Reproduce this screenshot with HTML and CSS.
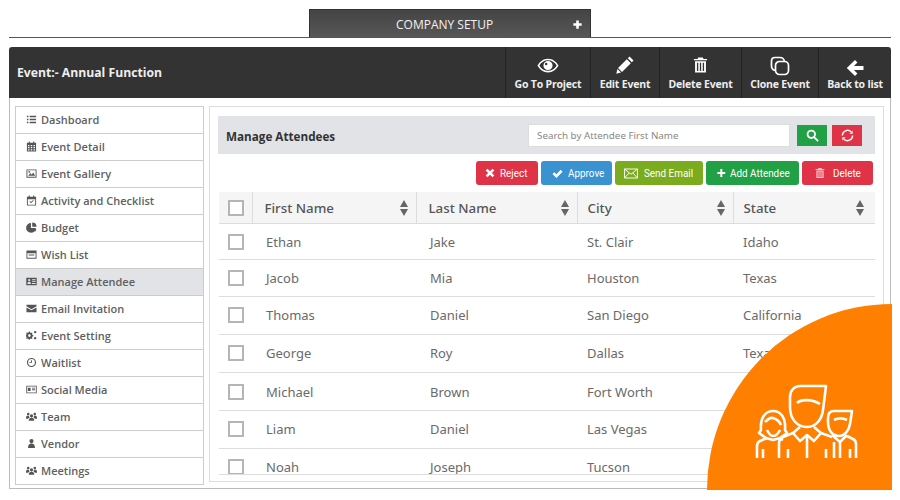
FILE: index.html
```html
<!DOCTYPE html>
<html lang="en">
<head>
    <meta charset="UTF-8">
    <title>Manage Attendees</title>
    <link rel="stylesheet" href="styles.css">
</head>

<body>
    <svg class="defs" width="0" height="0">
        <symbol id="i-list" viewBox="0 0 12 12"><path d="M1 2h1.600v1.600H1zM4 2h7v1.600H4zM1 5.200h1.600v1.600H1zM4 5.200h7v1.600H4zM1 8.400h1.600V10H1zM4 8.400h7V10H4z"/></symbol>
        <symbol id="i-cal" viewBox="0 0 12 12"><path d="M3 .5h1.200V2h3.600V.5H9V2h2v9.500H1V2h2zM2.200 4.300v1.400h1.600V4.300zm3 0v1.400h1.600V4.300zm3 0v1.400h1.600V4.300zm-6 2.300V8h1.600V6.600zm3 0V8h1.600V6.600zm3 0V8h1.600V6.600zm-6 2.300v1.400h1.600V8.900zm3 0v1.400h1.600V8.900zm3 0v1.400h1.600V8.900z"/></symbol>
        <symbol id="i-pic" viewBox="0 0 12 12"><path fill-rule="evenodd" d="M.5 1.500h11v9H.5zm1 1v7h9v-7zM2.500 8.500l2.200-3 1.600 1.800 1.500-2.300 2.200 3.500zM3.500 3.200a1 1 0 1 1 0 2 1 1 0 0 1 0-2z"/></symbol>
        <symbol id="i-check" viewBox="0 0 12 12"><path fill-rule="evenodd" d="M3 .5h1.200V2h3.600V.5H9V2h2v9.500H1V2h2zM2 4.500v6h8v-6zM3.700 7.200l.7-.7 1.100 1.100 2.200-2.200.7.7-2.900 2.900z"/></symbol>
        <symbol id="i-pie" viewBox="0 0 12 12"><path d="M5.400 1.200v5.400h5.300A5.300 5.300 0 1 1 5.400 1.200zM6.800.5a4.800 4.800 0 0 1 4.700 4.700H6.800zM7.200 7.700h4a4.800 4.800 0 0 1-1.300 2.800z"/></symbol>
        <symbol id="i-wish" viewBox="0 0 12 12"><path fill-rule="evenodd" d="M.5 1.500h11v9H.5zm1 3v5h9v-5zM3 6h6v1.200H3z"/></symbol>
        <symbol id="i-card" viewBox="0 0 12 12"><path fill-rule="evenodd" d="M.3 1.800h11.400v8.400H.3zM3.500 3.300a1.200 1.200 0 1 0 0 2.400 1.200 1.200 0 0 0 0-2.400zM1.600 8.600h3.800c0-1.500-.7-2.300-1.900-2.300S1.600 7.100 1.600 8.600zM6.500 3.600v1h4v-1zm0 2v1h4v-1zm0 2v1h4v-1z"/></symbol>
        <symbol id="i-mail" viewBox="0 0 12 12"><path d="M.5 2h11v1.600L6 6.700.5 3.600zM.5 5l5.500 3 5.500-3v5H.5z"/></symbol>
        <symbol id="i-gears" viewBox="0 0 12 12"><path fill-rule="evenodd" d="M4.400 2.800l1 .4.900-.5.800.8-.5.900.4 1 1 .3v1.100l-1 .3-.4 1 .5.900-.8.800-.9-.5-1 .4-.3 1H3.200l-.3-1-1-.4-.9.500-.8-.8.500-.9-.4-1-1-.3V5.600l1-.3.4-1L.2 3.400 1 2.600l.9.500 1-.4.300-1h1.100zM3.700 4.700a1.400 1.400 0 1 0 0 2.800 1.400 1.400 0 0 0 0-2.800zM10 1a1.300 1.300 0 1 1 0 2.600A1.300 1.300 0 0 1 10 1zM10 7.600a1.300 1.300 0 1 1 0 2.600 1.300 1.300 0 0 1 0-2.600z"/></symbol>
        <symbol id="i-clock" viewBox="0 0 12 12"><path fill-rule="evenodd" d="M6 1a5 5 0 1 1 0 10A5 5 0 0 1 6 1zm0 1.300a3.700 3.700 0 1 0 0 7.400 3.700 3.700 0 0 0 0-7.400zM5.500 3.500h1v2.900H3.700v-1h1.800z"/></symbol>
        <symbol id="i-social" viewBox="0 0 12 12"><path fill-rule="evenodd" d="M.3 1.800h11.400v8.400H.3zm.9.900v6.600h9.600V2.700zM2 4h3v3.600H2zM6.500 4h3.500v1H6.500zm0 1.800h3.500v1H6.500z"/></symbol>
        <symbol id="i-team" viewBox="0 0 12 12"><path d="M6 3.500a1.800 1.800 0 1 1 0 3.600 1.800 1.800 0 0 1 0-3.600zM2.400 2a1.400 1.400 0 1 1 0 2.800 1.400 1.400 0 0 1 0-2.800zM9.600 2a1.400 1.400 0 1 1 0 2.800 1.400 1.400 0 0 1 0-2.800zM3 10.500c0-2.400 1-3.200 3-3.200s3 .8 3 3.200zM0 7.500c0-1.500.7-2.200 2.400-2.200l1 .4a2.600 2.600 0 0 0 .5 1.300C3 7.400 2.400 8 2.200 8.500H0zM12 7.500c0-1.500-.7-2.200-2.400-2.200l-1 .4a2.600 2.600 0 0 1-.5 1.300c.9.400 1.500 1 1.700 1.500H12z"/></symbol>
        <symbol id="i-user" viewBox="0 0 12 12"><path d="M6 1a2.300 2.300 0 1 1 0 4.600A2.300 2.300 0 0 1 6 1zM2.200 11c0-3.300 1.200-5 3.800-5s3.800 1.700 3.800 5z"/></symbol>
        <symbol id="i-trash" viewBox="0 0 16 18"><path fill-rule="evenodd" d="M5.500 1h5l.7 1.600H15v1.400H1V2.600h3.800zM2.200 5h11.600v12H2.200zm2 1.500v9h1.400v-9zm3.100 0v9h1.400v-9zm3.100 0v9h1.400v-9z"/></symbol>
    </svg>

    <div class="page">
        <div class="tab-bar">
            <div class="tab">
                <span class="tab-label">COMPANY SETUP</span>
                <svg viewBox="0 0 12 12" width="9" height="9"><path fill="#fff" d="M4.300 .5h3.400v3.800h3.800v3.400H7.700v3.800H4.300V7.700H.5V4.300h3.800z"/></svg>
            </div>
        </div>

        <header class="event-bar">
            <h1 class="event-title">Event:- Annual Function</h1>
            <nav class="tools">
                <a class="tool tool-project">
                    <svg class="tool-icon" viewBox="0 0 24 18" width="22" height="17"><path fill="#fff" fill-rule="evenodd" d="M12 1.500c5 0 9 3 11.500 7.500C21 13.500 17 16.500 12 16.500S3 13.500.5 9C3 4.500 7 1.500 12 1.500zM12 3.200C8 3.200 4.600 5.400 2.500 9c2.100 3.600 5.500 5.800 9.500 5.800s7.400-2.200 9.500-5.800c-2.100-3.600-5.500-5.800-9.500-5.800zM12 4a5 5 0 1 1 0 10 5 5 0 0 1 0-10zm-2 2a1.300 1.300 0 1 0 0 2.600A1.300 1.300 0 0 0 10 6z"/></svg>
                    <span>Go To Project</span>
                </a>
                <a class="tool tool-edit">
                    <svg class="tool-icon" viewBox="0 0 18 18" width="18" height="18"><path fill="#fff" d="M13.500.5l4 4-1.700 1.700-4-4zM10.800 3.200l4 4L6 16l-4-4zM1.400 13l3.600 3.600-4.700 1.100z"/></svg>
                    <span>Edit Event</span>
                </a>
                <a class="tool tool-delete">
                    <svg class="tool-icon" viewBox="0 0 16 18" width="15" height="18"><use href="#i-trash" fill="#fff"/></svg>
                    <span>Delete Event</span>
                </a>
                <a class="tool tool-clone">
                    <svg class="tool-icon" viewBox="0 0 20 20" width="20" height="20" fill="none" stroke="#fff" stroke-width="1.700"><path d="M5.500 14.500C3 14 1.500 12.500 1.500 10V5c0-2.200 1.300-3.500 3.500-3.500h5c2.500 0 4 1.500 4.500 4"/><rect x="5.500" y="5.500" width="13" height="13" rx="4"/></svg>
                    <span>Clone Event</span>
                </a>
                <a class="tool tool-back">
                    <svg class="tool-icon" viewBox="0 0 18 18" width="18" height="18"><path fill="#fff" d="M9 1l2.400 2.400-3.400 3.700h9.500v3.800H8l3.400 3.700L9 17 .8 9z"/></svg>
                    <span>Back to list</span>
                </a>
            </nav>
        </header>

        <div class="frame">
            <ul class="side-menu">
                <li><svg class="side-icon"><use href="#i-list"/></svg>Dashboard</li>
                <li><svg class="side-icon"><use href="#i-cal"/></svg>Event Detail</li>
                <li><svg class="side-icon"><use href="#i-pic"/></svg>Event Gallery</li>
                <li><svg class="side-icon"><use href="#i-check"/></svg>Activity and Checklist</li>
                <li><svg class="side-icon"><use href="#i-pie"/></svg>Budget</li>
                <li><svg class="side-icon"><use href="#i-wish"/></svg>Wish List</li>
                <li class="active"><svg class="side-icon"><use href="#i-card"/></svg>Manage Attendee</li>
                <li><svg class="side-icon"><use href="#i-mail"/></svg>Email Invitation</li>
                <li><svg class="side-icon"><use href="#i-gears"/></svg>Event Setting</li>
                <li><svg class="side-icon"><use href="#i-clock"/></svg>Waitlist</li>
                <li><svg class="side-icon"><use href="#i-social"/></svg>Social Media</li>
                <li><svg class="side-icon"><use href="#i-team"/></svg>Team</li>
                <li><svg class="side-icon"><use href="#i-user"/></svg>Vendor</li>
                <li><svg class="side-icon"><use href="#i-team"/></svg>Meetings</li>
            </ul>

            <main class="panel">
                <div class="panel-head">
                    <h2 class="panel-title">Manage Attendees</h2>
                    <input class="search" type="text" placeholder="Search by Attendee First Name">
                    <button class="square green">
                        <svg viewBox="0 0 14 14" width="13" height="13" fill="none" stroke="#fff" stroke-width="2"><circle cx="5.700" cy="5.700" r="4"/><path d="M8.700 8.700l4.300 4.300"/></svg>
                    </button>
                    <button class="square red">
                        <svg viewBox="0 0 14 14" width="13" height="13" fill="none" stroke="#fff" stroke-width="1.500"><path d="M1.500 7a5.500 5.500 0 0 1 9.300-4M12.500 7a5.500 5.500 0 0 1-9.300 4"/><path fill="#fff" stroke="none" d="M12.500 1.500v3.500H9zM1.500 12.500V9H5z"/></svg>
                    </button>
                </div>

                <div class="actions">
                    <button class="act red btn-reject"><svg viewBox="0 0 12 12" width="10" height="10"><path fill="#fff" d="M3 .8L6 3.800 9 .8l2.200 2.200-3 3 3 3L9 11.200l-3-3-3 3L.8 9l3-3-3-3z"/></svg><span>Reject</span></button>
                    <button class="act blue btn-approve"><svg viewBox="0 0 12 12" width="11" height="11"><path fill="#fff" d="M.5 6.500l2-2 2.300 2.300L9.500 2l2 2-6.700 6.800z"/></svg><span>Approve</span></button>
                    <button class="act olive btn-mail"><svg viewBox="0 0 18 13" width="14" height="11" fill="none" stroke="#fff" stroke-width="1.200"><path d="M.7.700h16.600v11.600H.7zM.7.700L9 7.500 17.300.7M.7 12.300l6-6.600M17.300 12.300l-6-6.600"/></svg><span>Send Email</span></button>
                    <button class="act green btn-add"><svg viewBox="0 0 12 12" width="10" height="10"><path fill="#fff" d="M4.600 .5h2.800v4.100h4.100v2.800H7.400v4.100H4.600V7.400H.5V4.600h4.100z"/></svg><span>Add Attendee</span></button>
                    <button class="act red btn-delete"><svg viewBox="0 0 16 18" width="10" height="12"><use href="#i-trash" fill="#f7c6cb"/></svg><span>Delete</span></button>
                </div>

                <div class="table-wrap">
                    <table class="grid">
                        <colgroup>
                            <col class="col-check"><col class="col-first"><col class="col-last"><col class="col-city"><col class="col-state">
                        </colgroup>
                        <thead>
                            <tr>
                                <th><span class="box"></span></th>
                                <th><div class="th-in">First Name<span class="sort"></span></div></th>
                                <th><div class="th-in">Last Name<span class="sort"></span></div></th>
                                <th class="tight"><div class="th-in">City<span class="sort"></span></div></th>
                                <th class="tight"><div class="th-in th-end">State<span class="sort"></span></div></th>
                            </tr>
                        </thead>
                        <tbody>
                            <tr class="h36"><td><span class="box"></span></td><td>Ethan</td><td>Jake</td><td class="tight">St. Clair</td><td class="tight">Idaho</td></tr>
                            <tr class="h37"><td><span class="box"></span></td><td>Jacob</td><td>Mia</td><td class="tight">Houston</td><td class="tight">Texas</td></tr>
                            <tr class="up"><td><span class="box"></span></td><td>Thomas</td><td>Daniel</td><td class="tight">San Diego</td><td class="tight">California</td></tr>
                            <tr class="up"><td><span class="box"></span></td><td>George</td><td>Roy</td><td class="tight">Dallas</td><td class="tight">Texas</td></tr>
                            <tr><td><span class="box"></span></td><td>Michael</td><td>Brown</td><td class="tight">Fort Worth</td><td class="tight">Texas</td></tr>
                            <tr class="up"><td><span class="box"></span></td><td>Liam</td><td>Daniel</td><td class="tight">Las Vegas</td><td class="tight">Nevada</td></tr>
                            <tr class="up"><td><span class="box"></span></td><td>Noah</td><td>Joseph</td><td class="tight">Tucson</td><td class="tight">Arizona</td></tr>
                        </tbody>
                    </table>
                </div>
            </main>
        </div>
    </div>

    <div class="corner">
        <svg class="corner-icon" viewBox="0 0 115 85" width="115" height="85" fill="none" stroke="#fff" stroke-width="2.600" stroke-linejoin="round" stroke-linecap="butt">
            <path d="M76 6H50c-6 0-10 5-10 11v10c0 12 7 20 17 20s15-9 16-17z"/>
            <path d="M47 23c4-4 15-4 23 1"/>
            <path d="M50 47l-7 6 7 8 7-6 7 6 7-8-7-6"/>
            <path d="M57 55v23M43 53l-10 4c-3 1-4 4-4 7v14M71 53l11 4M38 69v9M76 69v9"/>
            <path d="M11 50c-1-12 4-19 12-19s13 7 12 19l2 3-7 5-7 2-7-2-7-5z"/>
            <path d="M15 42c3-3 5-5 8-4s6 2 8 7M17 50c2 4 4 6 6 6s5-2 7-6"/>
            <path d="M7 78V66c0-3 1-4 3-5l7-3M13 69v9M29 58l4 2"/>
            <path d="M102 31H84c-4 0-6 3-6 7v4c0 9 5 14 11 14s10-6 11-12z"/>
            <path d="M84 40c4-2 9-2 13 0"/>
            <path d="M82 55l8 7 7-7M90 62v16M84 78V62M97 56l6 3c2 1 3 3 3 5v14M100 69v9"/>
        </svg>
    </div>
</body>
</html>
```

FILE: styles.css
```css
body {
    margin: 0;
    padding: 0;
    font-family: 'Open Sans', sans-serif;
    background-color: #fff;
    color: #555;
    overflow: hidden;
}

.defs {
    position: absolute;
}

.page {
    width: 882px;
    margin: 0 9px;
    padding-top: 9px;
}

/* top tab */
.tab-bar {
    display: flex;
    justify-content: center;
    height: 28px;
    border-bottom: 1px solid #555;
}

.tab {
    width: 282px;
    box-sizing: border-box;
    display: flex;
    align-items: center;
    background: linear-gradient(#444, #575757);
    border: 1px solid #333;
    border-bottom: none;
    color: #f2f2f2;
    font-size: 12px;
    padding: 2px 8px 0 86px;
}

.tab-label {
    flex: 1;
}

/* dark event bar */
.event-bar {
    display: flex;
    justify-content: space-between;
    align-items: stretch;
    height: 51px;
    margin-top: 9px;
    background-color: #333;
    border-radius: 3px 3px 0 0;
    color: #fff;
}

.event-title {
    margin: 0;
    padding-left: 8px;
    align-self: center;
    font-size: 12.2px;
    font-weight: 700;
    color: #eee;
}

.tools {
    display: flex;
}

.tool {
    display: flex;
    flex-direction: column;
    align-items: center;
    justify-content: flex-end;
    gap: 3px;
    box-sizing: border-box;
    padding-bottom: 7px;
    border-left: 1px solid #222;
    color: #eee;
    font-size: 10.5px;
    font-weight: 700;
    letter-spacing: -0.2px;
    white-space: nowrap;
}

.tool-project { width: 85px; }
.tool-edit { width: 69px; }
.tool-delete { width: 82px; }
.tool-clone { width: 77px; gap: 1px; }
.tool-back { width: 73px; gap: 0; }

/* frame under the bar */
.frame {
    display: flex;
    align-items: flex-start;
    gap: 5px;
    height: 391px;
    box-sizing: border-box;
    padding: 8px 6px 0 5px;
    border: 1px solid #bbb;
    border-top: none;
}

.side-menu {
    width: 189px;
    margin: 0;
    padding: 0;
    list-style: none;
    border: 1px solid #ccc;
    box-sizing: border-box;
    flex-shrink: 0;
}

.side-menu li {
    display: flex;
    align-items: center;
    height: 27px;
    box-sizing: border-box;
    padding: 0 0 2px 10px;
    border-bottom: 1px solid #ccc;
    font-size: 11px;
    font-weight: 600;
    color: #5f5f5f;
}

.side-menu li:last-child {
    height: 26px;
    border-bottom: none;
}

.side-menu .active {
    background-color: #e1e3e6;
}

.side-icon {
    width: 11px;
    height: 11px;
    margin-right: 4px;
    fill: #555;
}

.panel {
    flex: 1;
    height: 376px;
    box-sizing: border-box;
    padding: 9px 8px 0;
    border: 1px solid #ddd;
}

.panel-head {
    display: flex;
    align-items: center;
    height: 38px;
    padding: 0 13px 0 8px;
    background-color: #e1e3e6;
}

.panel-title {
    flex: 1;
    margin: 0;
    padding-top: 2px;
    font-size: 11.7px;
    font-weight: 700;
    color: #333;
}

.search {
    width: 262px;
    height: 23px;
    box-sizing: border-box;
    padding: 0 8px;
    border: 1px solid #ddd;
    background-color: #fff;
    font-family: 'Noto Sans', sans-serif;
    font-size: 9.8px;
}

.search::placeholder {
    color: #888;
}

.square {
    width: 30px;
    height: 21px;
    margin-left: 7px;
    display: flex;
    align-items: center;
    justify-content: center;
    padding: 0;
    border: none;
}

.square + .square {
    margin-left: 5px;
}

.green { background-color: #22a045; }
.red { background-color: #df3448; }
.blue { background-color: #3a93d0; }
.olive { background-color: #7bab1f; }

.actions {
    display: flex;
    justify-content: flex-end;
    gap: 3px;
    margin: 7px 2px 7px 0;
}

.act {
    display: flex;
    align-items: center;
    height: 24px;
    border: none;
    border-radius: 3px;
    color: #fff;
    font-family: Roboto, sans-serif;
    font-size: 11.5px;
    white-space: nowrap;
}

/* the labels in the shot are a condensed face, none is installed */
.act span {
    display: block;
    transform: scaleX(0.86);
    transform-origin: left center;
}

.btn-reject { width: 62px; padding: 0 0 0 9px; gap: 5px; }
.btn-approve { width: 71px; padding: 0 0 0 11px; gap: 5px; }
.btn-mail { width: 88px; padding: 0 0 0 9px; gap: 6px; }
.btn-add { width: 93px; padding: 0 0 0 11px; gap: 4px; }
.btn-delete { width: 71px; padding: 0 0 0 13px; gap: 8px; }

/* table, clipped like a scroll area */
.table-wrap {
    height: 282px;
    margin-left: 1px;
    overflow: hidden;
    border-bottom: 1px solid #ddd;
}

.grid {
    width: 656px;
    table-layout: fixed;
    border-collapse: collapse;
    font-family: 'Noto Sans', sans-serif;
}

.col-check { width: 33px; }
.col-first { width: 164px; }
.col-last { width: 161px; }
.col-city { width: 156px; }
.col-state { width: 142px; }

.grid th {
    height: 31px;
    padding: 0 0 0 12px;
    background-color: #f5f5f5;
    border-right: 1px solid #ddd;
    border-bottom: 1px solid #ddd;
    text-align: left;
    font-size: 13.3px;
    font-weight: 500;
    color: #555;
}

.grid th:first-child,
.grid td:first-child {
    padding: 0 0 0 9px;
}

.grid th:last-child {
    border-right: none;
}

.grid .tight {
    padding-left: 10px;
}

.th-in {
    display: flex;
    align-items: center;
    justify-content: space-between;
    padding-right: 7px;
}

.th-in.th-end {
    padding-right: 10px;
}

.sort {
    display: block;
    width: 9px;
    height: 16px;
    position: relative;
}

.sort::before,
.sort::after {
    content: "";
    position: absolute;
    left: 0;
    border-left: 4.500px solid transparent;
    border-right: 4.500px solid transparent;
}

.sort::before {
    top: 0;
    border-bottom: 7px solid #666;
}

.sort::after {
    bottom: 0;
    border-top: 7px solid #666;
}

.grid td {
    height: 38px;
    box-sizing: border-box;
    padding: 0 0 0 14px;
    border-bottom: 1px solid #ddd;
    font-size: 13px;
    color: #6a6a6a;
}

.grid .h36 td { height: 36px; }
.grid .h37 td { height: 37px; }
.grid .up td { padding-bottom: 2px; }

.box {
    display: block;
    width: 16px;
    height: 16px;
    box-sizing: border-box;
    border: 2px solid #b5b5b5;
    background-color: #fff;
}

/* orange corner badge */
.corner {
    position: absolute;
    left: 707px;
    top: 304px;
    width: 185px;
    height: 186px;
    background-color: #ff7f00;
    border-top-left-radius: 100%;
}

.corner-icon {
    position: absolute;
    left: 43px;
    top: 76px;
}
```
